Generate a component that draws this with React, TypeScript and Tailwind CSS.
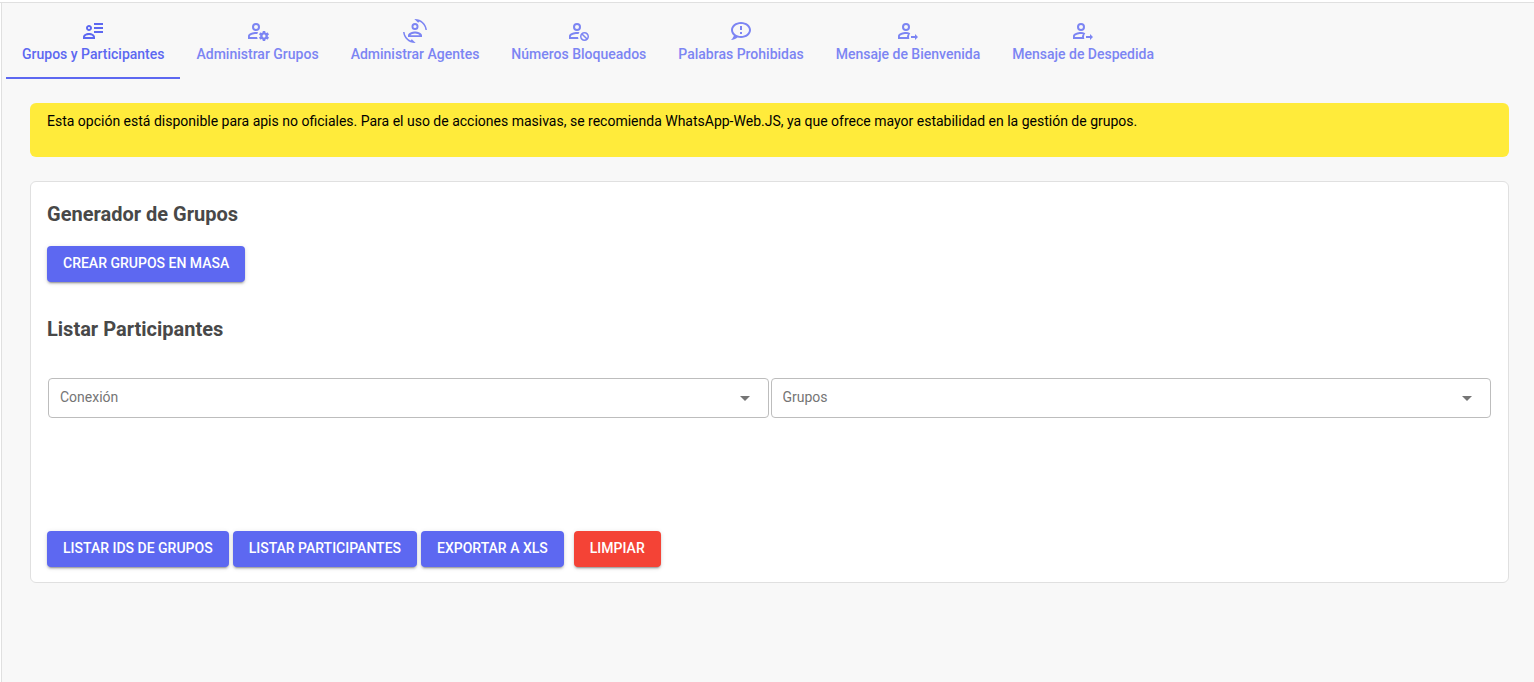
import { useState } from 'react';
import type { ReactNode } from 'react';
import clsx from 'clsx';

const HEAD =
  'M10 4A4 4 0 0 0 6 8A4 4 0 0 0 10 12A4 4 0 0 0 14 8A4 4 0 0 0 10 4M10 6A2 2 0 0 1 12 8A2 2 0 0 1 10 10A2 2 0 0 1 8 8A2 2 0 0 1 10 6';

const icons = {
  details:
    'M11 9C11 10.66 9.66 12 8 12C6.34 12 5 10.66 5 9C5 7.34 6.34 6 8 6C9.66 6 11 7.34 11 9M14 20H2V18C2 15.79 4.69 14 8 14C11.31 14 14 15.79 14 18M7 9C7 9.55 7.45 10 8 10C8.55 10 9 9.55 9 9C9 8.45 8.55 8 8 8C7.45 8 7 8.45 7 9M4 18H12C12 16.9 10.21 16 8 16C5.79 16 4 16.9 4 18M22 12V14H13V12M22 8V10H13V8M22 4V6H13V4Z',
  cog:
    HEAD +
    'M17 12C16.84 12 16.76 12.08 16.76 12.24L16.5 13.5C16.28 13.68 15.96 13.84 15.72 14L14.44 13.5C14.36 13.5 14.2 13.5 14.12 13.6L13.16 15.36C13.08 15.44 13.08 15.6 13.24 15.68L14.28 16.5V17.5L13.24 18.32C13.16 18.4 13.08 18.56 13.16 18.64L14.12 20.4C14.2 20.5 14.36 20.5 14.44 20.5L15.72 20C15.96 20.16 16.28 20.32 16.5 20.5L16.76 21.76C16.76 21.92 16.84 22 17 22H19C19.08 22 19.24 21.92 19.24 21.76L19.4 20.5C19.72 20.32 20.04 20.16 20.28 20L21.5 20.5C21.64 20.5 21.8 20.5 21.8 20.4L22.84 18.64C22.92 18.56 22.84 18.4 22.76 18.32L21.72 17.5V16.5L22.76 15.68C22.84 15.6 22.92 15.44 22.84 15.36L21.8 13.6C21.8 13.5 21.64 13.5 21.5 13.5L20.28 14C20.04 13.84 19.72 13.68 19.4 13.5L19.24 12.24C19.24 12.08 19.08 12 19 12H17M10 13C7.33 13 2 14.33 2 17V20H11.67C11.39 19.41 11.19 18.77 11.09 18.1H3.9V17C3.9 16.36 7.03 14.9 10 14.9C10.43 14.9 10.87 14.94 11.3 15C11.5 14.36 11.77 13.76 12.12 13.21C11.34 13.08 10.6 13 10 13M18.04 15.5C18.84 15.5 19.54 16.2 19.54 17.04C19.54 17.84 18.84 18.54 18.04 18.54C17.2 18.54 16.5 17.84 16.5 17.04C16.5 16.2 17.2 15.5 18.04 15.5Z',
  convert:
    'M7.5 21.5C4.25 19.94 1.91 16.76 1.55 13H.05C.56 19.16 5.71 24 12 24L12.66 23.97L8.85 20.16L7.5 21.5M16.5 2.5C19.77 4.04 22.09 7.24 22.45 11H23.95C23.44 4.84 18.29 0 12 0L11.34 .03L15.15 3.84L16.5 2.5M12 4A3.5 3.5 0 0 0 12 11A3.5 3.5 0 0 0 12 4M12 5.9A1.6 1.6 0 0 1 12 9.1A1.6 1.6 0 0 1 12 5.9M12 12.5C9.67 12.5 5 13.8 5 16.3V18H19V16.3C19 13.8 14.33 12.5 12 12.5M7.4 16.2C8.1 15.3 10.2 14.5 12 14.5C13.8 14.5 15.9 15.3 16.6 16.2Z',
  cancel:
    HEAD +
    'M10 13C7.33 13 2 14.33 2 17V20H11.5A6.5 6.5 0 0 1 11.03 18.1H3.9V17C3.9 16.36 7.03 14.9 10 14.9C10.5 14.9 11 14.95 11.5 15.03A6.5 6.5 0 0 1 12.55 13.29C11.61 13.1 10.71 13 10 13M17.5 13C15 13 13 15 13 17.5C13 20 15 22 17.5 22C20 22 22 20 22 17.5C22 15 20 13 17.5 13M17.5 14.5C19.16 14.5 20.5 15.84 20.5 17.5C20.5 18.06 20.35 18.58 20.08 19L16 14.92C16.42 14.65 16.94 14.5 17.5 14.5M14.92 16L19 20.08C18.58 20.35 18.06 20.5 17.5 20.5C15.84 20.5 14.5 19.16 14.5 17.5C14.5 16.94 14.65 16.42 14.92 16Z',
  alert:
    'M12 3C6.5 3 2 6.58 2 11C2.05 13.15 3.06 15.17 4.75 16.5C4.75 17.1 4.33 18.67 2 21C4.37 20.89 6.64 20 8.47 18.5C9.61 18.83 10.81 19 12 19C17.5 19 22 15.42 22 11C22 6.58 17.5 3 12 3M12 17C7.58 17 4 14.31 4 11C4 7.69 7.58 5 12 5C16.42 5 20 7.69 20 11C20 14.31 16.42 17 12 17M11 7H13V11H11V7M11 13H13V15H11V13Z',
  arrow:
    HEAD +
    'M19 21V19H15V17H19V15L22 18L19 21M10 13C7.33 13 2 14.33 2 17V20H13.35A6 6 0 0 1 13 18C13 16.6 13.5 15.3 14.3 14.2C12.9 13.4 11.3 13 10 13M10 14.9C10.6 14.9 11.3 14.97 11.9 15.1C11.3 16.1 11 17.1 11 18.1H3.9V17C3.9 16.36 7.03 14.9 10 14.9Z'
};

const tabs: { label: string; icon: keyof typeof icons }[] = [
  { label: 'Grupos y Participantes', icon: 'details' },
  { label: 'Administrar Grupos', icon: 'cog' },
  { label: 'Administrar Agentes', icon: 'convert' },
  { label: 'Números Bloqueados', icon: 'cancel' },
  { label: 'Palabras Prohibidas', icon: 'alert' },
  { label: 'Mensaje de Bienvenida', icon: 'arrow' },
  { label: 'Mensaje de Despedida', icon: 'arrow' }
];

function Button({
  children,
  danger = false,
  className
}: {
  children: ReactNode;
  danger?: boolean;
  className?: string;
}) {
  return (
    <button
      type="button"
      className={clsx(
        'h-9 rounded px-4 pb-0.5 text-sm font-medium uppercase text-white shadow-[0_3px_1px_-2px_rgba(0,0,0,0.2),0_2px_2px_0_rgba(0,0,0,0.14),0_1px_5px_0_rgba(0,0,0,0.12)]',
        danger ? 'bg-[#f44336]' : 'bg-[#5d68f1]',
        className
      )}
    >
      {children}
    </button>
  );
}

function Select({ id, label }: { id: string; label: string }) {
  return (
    <div className="relative">
      <select
        id={id}
        aria-label={label}
        defaultValue=""
        className="block h-10 w-full appearance-none rounded border border-[#bdbdbd] bg-white pr-9 pb-0.5 pl-[11px] text-sm text-[#757575]"
      >
        <option value="">{label}</option>
      </select>
      <svg
        viewBox="0 0 24 24"
        className="pointer-events-none absolute top-2 right-3 size-6 fill-[#757575]"
      >
        <path d="M7 10l5 5 5-5z" />
      </svg>
    </div>
  );
}

export default function App() {
  const [active, setActive] = useState(0);

  return (
    <div className="flex min-h-screen flex-col bg-white pt-0.5 font-[Roboto,sans-serif]">
      <div className="flex grow flex-col border-t border-[#e0e0e0] pl-px">
        <main className="grow border-l border-[#e0e0e0] bg-[#f8f8f8]">
          <div role="tablist" className="flex pt-1 pl-1">
            {tabs.map((tab, i) => (
              <button
                key={tab.label}
                type="button"
                role="tab"
                aria-selected={i === active}
                onClick={() => setActive(i)}
                className={clsx(
                  'flex h-18 flex-col items-center border-b-2 px-4 pt-3 text-sm font-medium whitespace-nowrap',
                  i === active
                    ? 'border-[#5d68f1] text-[#5d68f1]'
                    : 'border-transparent text-[#7c85f3]'
                )}
              >
                <svg viewBox="0 0 24 24" className="size-6 shrink-0 fill-current">
                  <path d={icons[tab.icon]} fillRule="evenodd" />
                </svg>
                <span className="leading-[22px]">{tab.label}</span>
              </button>
            ))}
          </div>

          <div className="mt-6 mr-[25px] ml-7">
            <div className="min-h-[54px] rounded-md bg-[#ffeb3b] px-[17px] py-2 text-sm text-black">
              Esta opción está disponible para apis no oficiales. Para el uso de
              acciones masivas, se recomienda WhatsApp-Web.JS, ya que ofrece
              mayor estabilidad en la gestión de grupos.
            </div>

            <section className="mt-6 rounded-md border border-[#e0e0e0] bg-white p-4 pb-[15px]">
              <h2 className="text-xl leading-8 font-bold text-[#484848]">
                Generador de Grupos
              </h2>
              <Button className="mt-4">Crear grupos en masa</Button>

              <h2 className="mt-[31px] text-xl leading-8 font-bold text-[#484848]">
                Listar Participantes
              </h2>
              <div className="mt-[33px] grid grid-cols-2 gap-0.5 px-px">
                <Select id="conexion" label="Conexión" />
                <Select id="grupos" label="Grupos" />
              </div>

              <div className="mt-[113px] flex flex-wrap gap-1">
                <Button>Listar IDs de grupos</Button>
                <Button>Listar participantes</Button>
                <Button>Exportar a XLS</Button>
                <Button danger className="ml-1.5">
                  Limpiar
                </Button>
              </div>
            </section>
          </div>
        </main>
      </div>
    </div>
  );
}
